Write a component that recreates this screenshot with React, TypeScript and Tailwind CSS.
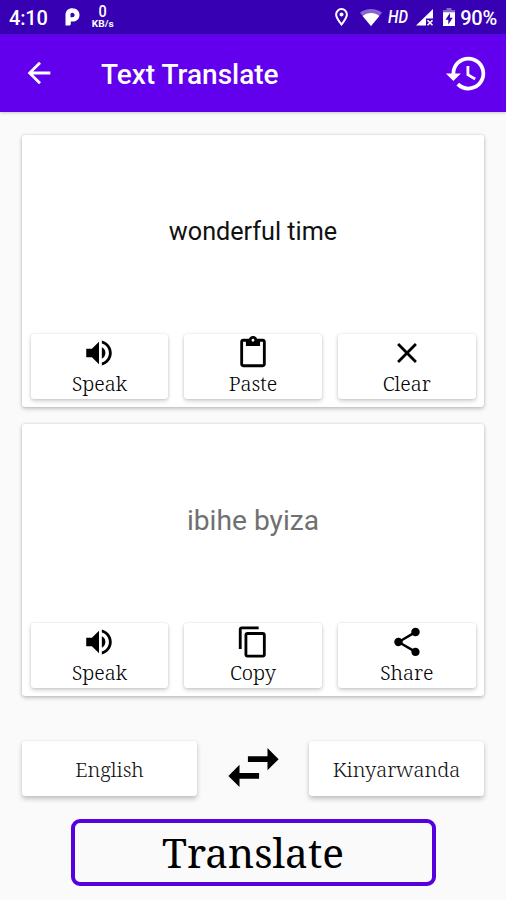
import React from 'react';
import { IconType } from 'react-icons';
import {
  MdArrowBack,
  MdClear,
  MdContentCopy,
  MdContentPaste,
  MdHistory,
  MdShare,
  MdSwapHoriz,
  MdVolumeUp,
} from 'react-icons/md';

interface Action {
  label: string;
  icon: IconType;
}

const sourceActions: Action[] = [
  { label: 'Speak', icon: MdVolumeUp },
  { label: 'Paste', icon: MdContentPaste },
  { label: 'Clear', icon: MdClear },
];

const resultActions: Action[] = [
  { label: 'Speak', icon: MdVolumeUp },
  { label: 'Copy', icon: MdContentCopy },
  { label: 'Share', icon: MdShare },
];

const StatusBar: React.FC = () => (
  <div className="flex h-[34px] items-center justify-between bg-[#3700b3] pl-[9px] pr-[9px] text-white">
    <div className="flex items-center">
      <span className="w-[56px] pt-[1px] text-[20px] font-medium leading-none tracking-[-0.2px]">4:10</span>
      <svg className="h-[18px] w-[15px]" viewBox="0 0 15 18">
        <path
          fill="#fff"
          fillRule="evenodd"
          d="M.5 17.5V7C.5 3 3.3.3 7.3.3c4.2 0 7.2 2.8 7.2 6.6s-2.7 6.6-6.6 6.6H5.8v2.2c0 1.2-.7 1.8-1.8 1.8H.5zM7.2 4.8c-1.2 0-1.7.8-1.7 1.8v2.7h1.7c1.5 0 2.4-.8 2.4-2.2 0-1.4-.9-2.3-2.4-2.3z"
        />
      </svg>
      <div className="ml-[12px] flex w-[22px] flex-col items-center pt-[1px]">
        <span className="h-[14px] scale-x-[0.9] text-[16px] font-medium leading-[12px]">0</span>
        <span className="h-[9px] scale-x-[1.12] text-[9px] font-bold leading-[9px]">KB/s</span>
      </div>
    </div>
    <div className="flex items-center">
      <svg className="h-[18px] w-[13px]" viewBox="0 0 13 18">
        <path
          fill="none"
          stroke="#fff"
          strokeWidth="2"
          d="M6.5 16.5C4 13.3 1.1 9.7 1.1 6.5a5.4 5.4 0 0 1 10.8 0c0 3.2-2.9 6.8-5.4 10z"
        />
        <circle cx="6.5" cy="6.5" r="2" fill="#fff" />
      </svg>
      <svg className="ml-[12px] h-[17px] w-[22px]" viewBox="0 0 22 17">
        <path fill="#fff" fillOpacity=".4" d="M0 3.8C6-1.2 16-1.2 22 3.8L11 17z" />
        <path fill="#fff" d="M2.6 7c4.8-4 12-4 16.8 0L11 17z" />
      </svg>
      <span className="ml-[6px] w-[22px] text-[18px] font-medium italic leading-none">
        <span className="inline-block origin-left scale-x-[0.84]">HD</span>
      </span>
      <svg className="ml-[6px] h-[17px] w-[17px]" viewBox="0 0 17 17">
        <path fill="#fff" d="M17 0v9.5h-7v7H0z" />
        <path stroke="#fff" strokeWidth="1.6" d="M11.5 11.3l5 5M16.5 11.3l-5 5" />
      </svg>
      <svg className="ml-[10px] h-[18px] w-[12px]" viewBox="0 0 12 18">
        <path fill="#fff" fillOpacity=".4" d="M3.5 0h5v2H12v2.5H0V2h3.5z" />
        <path fill="#fff" d="M0 4.2h12V18H0z" />
        <path fill="#3700b3" d="M7 5l-4.5 6.8h2.8v4.7l4.4-6.8H7z" />
      </svg>
      <span className="ml-[5px] pt-[1px] text-[20px] font-medium leading-none tracking-[-0.2px]">90%</span>
    </div>
  </div>
);

const ActionButton: React.FC<Action> = ({ label, icon: Icon }) => (
  <button className="flex h-[65px] flex-col items-center rounded-[3px] bg-white pt-[2px] shadow-[0_2px_4px_rgba(0,0,0,0.2),0_0_2px_rgba(0,0,0,0.12)]">
    <Icon className="h-[34px] w-[34px] shrink-0" />
    <span className="font-['Noto_Serif','DejaVu_Serif_Condensed',serif] text-[20.3px] font-light leading-[26px]">
      {label}
    </span>
  </button>
);

interface TextCardProps {
  actions: Action[];
  children: React.ReactNode;
}

const TextCard: React.FC<TextCardProps> = ({ actions, children }) => (
  <section className="flex h-[272px] flex-col rounded-[3px] bg-white px-[8.5px] pb-2 shadow-[0_2px_4px_rgba(0,0,0,0.2),0_0_3px_rgba(0,0,0,0.15)]">
    <div className="flex flex-1 items-center justify-center pb-[5px]">{children}</div>
    <div className="grid grid-cols-3 gap-4">
      {actions.map((action) => (
        <ActionButton key={action.label} {...action} />
      ))}
    </div>
  </section>
);

const LanguageButton: React.FC<{ name: string }> = ({ name }) => (
  <button className="h-[55px] w-[175px] rounded-[3px] bg-white pt-[2px] font-['Noto_Serif','DejaVu_Serif_Condensed',serif] text-[20.2px] font-light text-[#111] shadow-[0_3px_5px_rgba(0,0,0,0.22),0_0_2px_rgba(0,0,0,0.1)]">
    {name}
  </button>
);

export default function App() {
  return (
    <div className="flex h-[900px] w-[506px] flex-col overflow-hidden bg-[#fafafa] font-[Roboto,sans-serif] text-black">
      <StatusBar />
      <header className="flex h-[78px] items-center bg-[#6200ee] pl-[22px] pr-[17px] text-white shadow-[0_1px_3px_rgba(0,0,0,0.2)]">
        <MdArrowBack className="h-[34px] w-[34px]" />
        <h1 className="ml-[45px] flex-1 pt-[3px] text-[28px] font-medium leading-none">
          Text Translate
        </h1>
        <MdHistory className="h-[45px] w-[45px]" />
      </header>

      <main className="flex flex-1 flex-col px-[22px] pt-[23px]">
        <div className="flex flex-col gap-[17px]">
          <TextCard actions={sourceActions}>
            <p className="text-[25.2px] text-[#111]">wonderful time</p>
          </TextCard>
          <TextCard actions={resultActions}>
            <p className="text-[28.2px] text-[#707070]">ibihe byiza</p>
          </TextCard>
        </div>

        <div className="mt-[45px] flex h-[55px] items-center justify-between">
          <LanguageButton name="English" />
          <MdSwapHoriz className="h-[67px] w-[67px] -translate-y-[1px]" />
          <LanguageButton name="Kinyarwanda" />
        </div>

        <button className="mt-[22.5px] h-[67px] w-[365px] self-center rounded-[9px] border-4 border-[#5500dd] pt-[2px] font-['Noto_Serif','DejaVu_Serif_Condensed',serif] text-[40.6px] font-normal leading-none">
          Translate
        </button>
      </main>
    </div>
  );
}
